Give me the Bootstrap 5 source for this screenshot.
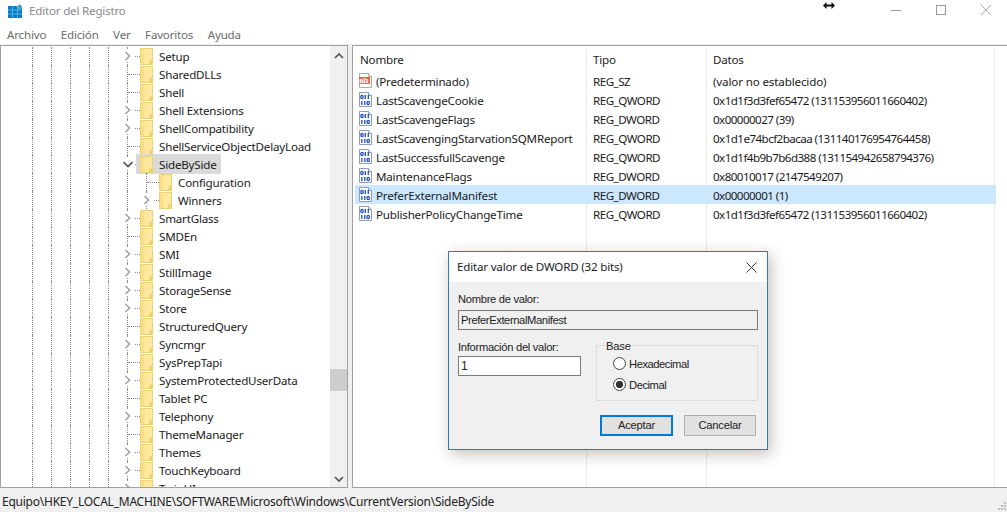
<!DOCTYPE html>
<html lang="es">
<head>
<meta charset="utf-8">
<title>Editor del Registro</title>
<link href="https://cdn.jsdelivr.net/npm/bootstrap@5.3.0/dist/css/bootstrap.min.css" rel="stylesheet">
<style>
html,body{height:512px;overflow:hidden}
body{font-family:"Noto Sans",sans-serif;font-size:11.6px;letter-spacing:-.2px;color:#1a1a1a;background:#fff;line-height:18px}
.win{width:1007px;height:512px;position:relative}
.titlebar{height:22px;color:#8a8a8a;padding-left:8px}
.titlebar .ttl{margin-left:7px}
.wcgroup{margin-right:16px;margin-bottom:2px}
.wc{margin-left:35px}
.menubar{height:24px;color:#6b6b6b;padding-left:7px;padding-top:4px;gap:14.5px;border-bottom:1px solid #f0f0f0}
.mainarea{height:443px;background:#f0f0f0}
.treepane{width:348px;background:#fff;border:1px solid #a0a0a0;overflow:hidden}
.treescroll{width:17px;background:#f0f0f0;flex:none}
.arrtop{margin-top:6px}
.treebody{width:329px;height:441px;overflow:hidden;padding-top:1px;padding-left:31px;flex:none}
.tr-row{height:18px;white-space:nowrap}
.guide{width:19px;height:18px;border-left:1px dotted #8c8c8c;flex:none}
.expcell{width:13px;height:18px;border-left:1px dotted #8c8c8c;flex:none}
.hdots{flex:1;border-top:1px dotted #8c8c8c;height:0}
.chev{flex:none;margin-left:-5px;background:#fff;height:12px;width:10px;margin-right:2px}
.fold{width:13px;height:17px;flex:none;display:block}
.tr-label{margin-left:6px;padding-top:2px}
.selwrap{background:#d9d9d9;margin-left:-4px;padding-left:4px;padding-right:4px}
.scthumb{position:absolute;left:0;top:323px;width:17px;height:22px;background:#cdcdcd}
.listpane{margin-left:4px;flex:1;background:#fff;border:1px solid #a0a0a0;border-width:1px 0 1px 1px;position:relative}
.colsep{position:absolute;top:0;bottom:0;width:1px;background:#e8e8ee}
.lhead{height:25px;padding-left:7px;padding-top:2px;position:relative}
.lrow{height:19px;position:relative;padding-left:5px;white-space:nowrap}
.lrow span{padding-top:2px}
.lrow.picked{background:#cce8ff;margin-left:2px;padding-left:3px;width:641px}
.cname{width:233px;flex:none}
.cname2{width:217px;flex:none}
.ctype{width:120px;flex:none}
.lrow .ctype{letter-spacing:-.5px}
.lrow .cdata{letter-spacing:-.55px}
.lrow .cdata.wordy{letter-spacing:-.14px}
.regico{width:15px;height:17px;flex:none;margin-right:3px}
.statusbar{height:24px;background:#f0f0f0;padding-left:2px;padding-top:3px;font-size:12px;color:#222;letter-spacing:-.24px}
.grip{position:absolute;right:0;bottom:0}
.dlg{position:absolute;left:448px;top:251px;width:320px;height:199px;background:#f0f0f0;border:1px solid #2b7cb8;box-shadow:3px 4px 14px rgba(0,0,0,.25);font-family:"Liberation Sans",sans-serif;font-size:11.2px;letter-spacing:-.3px;color:#222;line-height:14px}
.dlghead{height:30px;background:#fff;padding:0 10px 0 8px;font-family:"Noto Sans",sans-serif;font-size:11.6px;letter-spacing:-.2px}
.dlgbody{padding:10px 9px 0}
.fld-label{margin-bottom:4px}
.fld-label.tight{margin-bottom:2px}
.namefield.form-control{height:20px;background:#f0f0f0;border:1px solid #7a7a7a;border-radius:0;padding:0 2px;font-size:11.2px;color:#222;line-height:14px;width:300px;letter-spacing:-.39px}
.valfield.form-control{height:20px;width:123px;border:1px solid #7a7a7a;border-radius:0;padding:0 2px;font-size:12px;color:#222}
.valcol{width:138px;padding-top:10px}
.basebox{width:162px;height:56px;border:1px solid #dcdcdc;position:relative;margin-top:15px;padding:7px 0 0 16px}
.baselegend{position:absolute;left:8px;top:-7px;background:#f0f0f0;padding:0 1px;font-size:11.2px;letter-spacing:-.2px}
.radio-line.form-check{min-height:0;height:21px;padding-left:0;margin:0;gap:3px}
.radio-line .form-check-input{float:none;margin:0;width:13px;height:13px;border:1px solid #444;background-color:#fff;flex:none}
.radio-line .form-check-input:checked{background-color:#fff;border-color:#444;background-image:radial-gradient(circle,#333 0 3.4px,transparent 3.9px)}
.radio-line .form-check-label{font-size:11.2px;letter-spacing:-.45px}
.btnrow{margin-top:14px;padding-right:2px;gap:11px}
.wbtn.btn{height:21px;border-radius:0;padding:0;font-size:11.2px;letter-spacing:-.2px;background:#e1e1e1;color:#222;line-height:17px;font-family:"Liberation Sans",sans-serif}
.okbtn.btn{width:73px;border:2px solid #0078d7}
.cancelbtn.btn{width:72px;border:1px solid #adadad}
.cursoricon{position:absolute;left:823px;top:2px}
</style>
</head>
<body>
<svg width="0" height="0" class="position-absolute">
<defs>
<symbol id="f" viewBox="0 0 13 17"><rect x=".5" y=".5" width="12" height="16" fill="#ffe99f" stroke="#edd07c"/><path d="M1 1h3.500v15H1z" fill="#fcdf82"/><path d="M10.500 11l2 2.500v3h-4z" fill="#f5cf6c"/></symbol>
<symbol id="b" viewBox="0 0 15 17"><path d="M1.500 1.500h9l3 3v11h-12z" fill="#fff" stroke="#8f9cb5"/><path d="M10.500 1.500v3h3" fill="#e8edf5" stroke="#8f9cb5"/><g fill="none" stroke="#1f4fb5" stroke-width="1.300"><ellipse cx="4" cy="6" rx="1.200" ry="1.700"/><path d="M7.300 4v4M10.300 4v4"/><path d="M3.800 10v4"/><path d="M6.800 10v4"/><ellipse cx="10.200" cy="12" rx="1.200" ry="1.700"/></g></symbol>
<symbol id="c" viewBox="0 0 10 12"><path d="M2.500 2l4 4-4 4" fill="none" stroke="#a6a6a6" stroke-width="1.700"/></symbol>
</defs>
</svg>
<div class="win d-flex flex-column">
  <div class="titlebar d-flex align-items-center">
    <svg width="14" height="14" viewBox="0 0 14 14"><rect y="2" width="14" height="12" fill="#0a7ac4"/><path d="M4.500 2v12M9.500 2v12M0 6h14M0 10h14" stroke="#4fb3e0" stroke-width="1"/><path d="M11.500 0l2.500 2.500-2.500 2.500-2.500-2.500z" fill="#2aa0c9" stroke="#fff" stroke-width=".5"/></svg>
    <span class="ttl">Editor del Registro</span>
    <div class="wcgroup ms-auto d-flex align-items-center">
      <svg class="wc" width="10" height="10" viewBox="0 0 10 10"><path d="M0 5.500h10" stroke="#999"/></svg>
      <svg class="wc" width="10" height="10" viewBox="0 0 10 10"><rect x=".5" y=".5" width="9" height="9" fill="none" stroke="#999"/></svg>
      <svg class="wc" width="10" height="10" viewBox="0 0 10 10"><path d="M0 0l10 10M10 0L0 10" stroke="#aaa"/></svg>
    </div>
  </div>
  <svg class="cursoricon" width="12" height="7" viewBox="0 0 12 7"><path d="M0 3.500L3.500 0v2.500h5V0L12 3.500 8.500 7V4.500h-5V7z" fill="#111"/></svg>
  <div class="menubar d-flex align-items-center"><span>Archivo</span><span>Edición</span><span>Ver</span><span>Favoritos</span><span>Ayuda</span></div>
  <div class="mainarea d-flex">
    <div class="treepane d-flex">
      <div class="treebody">
        <div class="tr-row d-flex align-items-center"><i class="guide"></i><i class="guide"></i><i class="guide"></i><i class="guide"></i><i class="guide"></i><div class="expcell d-flex align-items-center"><svg class="chev"><use href="#c"/></svg><i class="hdots"></i></div><svg class="fold"><use href="#f"/></svg><span class="tr-label">Setup</span></div>
        <div class="tr-row d-flex align-items-center"><i class="guide"></i><i class="guide"></i><i class="guide"></i><i class="guide"></i><i class="guide"></i><div class="expcell d-flex align-items-center"><i class="hdots"></i></div><svg class="fold"><use href="#f"/></svg><span class="tr-label">SharedDLLs</span></div>
        <div class="tr-row d-flex align-items-center"><i class="guide"></i><i class="guide"></i><i class="guide"></i><i class="guide"></i><i class="guide"></i><div class="expcell d-flex align-items-center"><i class="hdots"></i></div><svg class="fold"><use href="#f"/></svg><span class="tr-label">Shell</span></div>
        <div class="tr-row d-flex align-items-center"><i class="guide"></i><i class="guide"></i><i class="guide"></i><i class="guide"></i><i class="guide"></i><div class="expcell d-flex align-items-center"><svg class="chev"><use href="#c"/></svg><i class="hdots"></i></div><svg class="fold"><use href="#f"/></svg><span class="tr-label">Shell Extensions</span></div>
        <div class="tr-row d-flex align-items-center"><i class="guide"></i><i class="guide"></i><i class="guide"></i><i class="guide"></i><i class="guide"></i><div class="expcell d-flex align-items-center"><svg class="chev"><use href="#c"/></svg><i class="hdots"></i></div><svg class="fold"><use href="#f"/></svg><span class="tr-label">ShellCompatibility</span></div>
        <div class="tr-row d-flex align-items-center"><i class="guide"></i><i class="guide"></i><i class="guide"></i><i class="guide"></i><i class="guide"></i><div class="expcell d-flex align-items-center"><i class="hdots"></i></div><svg class="fold"><use href="#f"/></svg><span class="tr-label">ShellServiceObjectDelayLoad</span></div>
        <div class="tr-row d-flex align-items-center"><i class="guide"></i><i class="guide"></i><i class="guide"></i><i class="guide"></i><i class="guide"></i><div class="expcell d-flex align-items-center"><svg class="chev" viewBox="0 0 10 12"><path d="M.5 4l4.500 4.500L9.500 4" fill="none" stroke="#555" stroke-width="1.700"/></svg><i class="hdots"></i></div><div class="selwrap d-flex align-items-center"><svg class="fold"><use href="#f"/></svg><span class="tr-label">SideBySide</span></div></div>
        <div class="tr-row d-flex align-items-center"><i class="guide"></i><i class="guide"></i><i class="guide"></i><i class="guide"></i><i class="guide"></i><i class="guide"></i><div class="expcell d-flex align-items-center"><i class="hdots"></i></div><svg class="fold"><use href="#f"/></svg><span class="tr-label">Configuration</span></div>
        <div class="tr-row d-flex align-items-center"><i class="guide"></i><i class="guide"></i><i class="guide"></i><i class="guide"></i><i class="guide"></i><i class="guide"></i><div class="expcell d-flex align-items-center"><svg class="chev"><use href="#c"/></svg><i class="hdots"></i></div><svg class="fold"><use href="#f"/></svg><span class="tr-label">Winners</span></div>
        <div class="tr-row d-flex align-items-center"><i class="guide"></i><i class="guide"></i><i class="guide"></i><i class="guide"></i><i class="guide"></i><div class="expcell d-flex align-items-center"><svg class="chev"><use href="#c"/></svg><i class="hdots"></i></div><svg class="fold"><use href="#f"/></svg><span class="tr-label">SmartGlass</span></div>
        <div class="tr-row d-flex align-items-center"><i class="guide"></i><i class="guide"></i><i class="guide"></i><i class="guide"></i><i class="guide"></i><div class="expcell d-flex align-items-center"><i class="hdots"></i></div><svg class="fold"><use href="#f"/></svg><span class="tr-label">SMDEn</span></div>
        <div class="tr-row d-flex align-items-center"><i class="guide"></i><i class="guide"></i><i class="guide"></i><i class="guide"></i><i class="guide"></i><div class="expcell d-flex align-items-center"><svg class="chev"><use href="#c"/></svg><i class="hdots"></i></div><svg class="fold"><use href="#f"/></svg><span class="tr-label">SMI</span></div>
        <div class="tr-row d-flex align-items-center"><i class="guide"></i><i class="guide"></i><i class="guide"></i><i class="guide"></i><i class="guide"></i><div class="expcell d-flex align-items-center"><svg class="chev"><use href="#c"/></svg><i class="hdots"></i></div><svg class="fold"><use href="#f"/></svg><span class="tr-label">StillImage</span></div>
        <div class="tr-row d-flex align-items-center"><i class="guide"></i><i class="guide"></i><i class="guide"></i><i class="guide"></i><i class="guide"></i><div class="expcell d-flex align-items-center"><svg class="chev"><use href="#c"/></svg><i class="hdots"></i></div><svg class="fold"><use href="#f"/></svg><span class="tr-label">StorageSense</span></div>
        <div class="tr-row d-flex align-items-center"><i class="guide"></i><i class="guide"></i><i class="guide"></i><i class="guide"></i><i class="guide"></i><div class="expcell d-flex align-items-center"><svg class="chev"><use href="#c"/></svg><i class="hdots"></i></div><svg class="fold"><use href="#f"/></svg><span class="tr-label">Store</span></div>
        <div class="tr-row d-flex align-items-center"><i class="guide"></i><i class="guide"></i><i class="guide"></i><i class="guide"></i><i class="guide"></i><div class="expcell d-flex align-items-center"><i class="hdots"></i></div><svg class="fold"><use href="#f"/></svg><span class="tr-label">StructuredQuery</span></div>
        <div class="tr-row d-flex align-items-center"><i class="guide"></i><i class="guide"></i><i class="guide"></i><i class="guide"></i><i class="guide"></i><div class="expcell d-flex align-items-center"><svg class="chev"><use href="#c"/></svg><i class="hdots"></i></div><svg class="fold"><use href="#f"/></svg><span class="tr-label">Syncmgr</span></div>
        <div class="tr-row d-flex align-items-center"><i class="guide"></i><i class="guide"></i><i class="guide"></i><i class="guide"></i><i class="guide"></i><div class="expcell d-flex align-items-center"><i class="hdots"></i></div><svg class="fold"><use href="#f"/></svg><span class="tr-label">SysPrepTapi</span></div>
        <div class="tr-row d-flex align-items-center"><i class="guide"></i><i class="guide"></i><i class="guide"></i><i class="guide"></i><i class="guide"></i><div class="expcell d-flex align-items-center"><svg class="chev"><use href="#c"/></svg><i class="hdots"></i></div><svg class="fold"><use href="#f"/></svg><span class="tr-label">SystemProtectedUserData</span></div>
        <div class="tr-row d-flex align-items-center"><i class="guide"></i><i class="guide"></i><i class="guide"></i><i class="guide"></i><i class="guide"></i><div class="expcell d-flex align-items-center"><i class="hdots"></i></div><svg class="fold"><use href="#f"/></svg><span class="tr-label">Tablet PC</span></div>
        <div class="tr-row d-flex align-items-center"><i class="guide"></i><i class="guide"></i><i class="guide"></i><i class="guide"></i><i class="guide"></i><div class="expcell d-flex align-items-center"><svg class="chev"><use href="#c"/></svg><i class="hdots"></i></div><svg class="fold"><use href="#f"/></svg><span class="tr-label">Telephony</span></div>
        <div class="tr-row d-flex align-items-center"><i class="guide"></i><i class="guide"></i><i class="guide"></i><i class="guide"></i><i class="guide"></i><div class="expcell d-flex align-items-center"><i class="hdots"></i></div><svg class="fold"><use href="#f"/></svg><span class="tr-label">ThemeManager</span></div>
        <div class="tr-row d-flex align-items-center"><i class="guide"></i><i class="guide"></i><i class="guide"></i><i class="guide"></i><i class="guide"></i><div class="expcell d-flex align-items-center"><svg class="chev"><use href="#c"/></svg><i class="hdots"></i></div><svg class="fold"><use href="#f"/></svg><span class="tr-label">Themes</span></div>
        <div class="tr-row d-flex align-items-center"><i class="guide"></i><i class="guide"></i><i class="guide"></i><i class="guide"></i><i class="guide"></i><div class="expcell d-flex align-items-center"><svg class="chev"><use href="#c"/></svg><i class="hdots"></i></div><svg class="fold"><use href="#f"/></svg><span class="tr-label">TouchKeyboard</span></div>
        <div class="tr-row d-flex align-items-center"><i class="guide"></i><i class="guide"></i><i class="guide"></i><i class="guide"></i><i class="guide"></i><div class="expcell d-flex align-items-center"><svg class="chev"><use href="#c"/></svg><i class="hdots"></i></div><svg class="fold"><use href="#f"/></svg><span class="tr-label">TwinUI</span></div>
      </div>
      <div class="treescroll position-relative d-flex flex-column justify-content-between align-items-center">
        <svg class="arrtop" width="10" height="7" viewBox="0 0 10 7"><path d="M1 6l4-4 4 4" fill="none" stroke="#555" stroke-width="1.700"/></svg>
        <div class="scthumb"></div>
        <svg class="mb-1" width="10" height="7" viewBox="0 0 10 7"><path d="M1 1l4 4 4-4" fill="none" stroke="#555" stroke-width="1.700"/></svg>
      </div>
    </div>
    <div class="listpane">
      <i class="colsep" style="left:233px"></i><i class="colsep" style="left:353px"></i><i class="colsep" style="left:641px"></i>
      <div class="lhead d-flex align-items-center"><span class="cname">Nombre</span><span class="ctype">Tipo</span><span>Datos</span></div>
      <div class="lrow d-flex align-items-center"><svg class="regico" viewBox="0 0 15 17"><path d="M1.500 1.500h9l3 3v11h-12z" fill="#fff" stroke="#b9a79c"/><path d="M10.500 1.500v3h3" fill="#f4ece6" stroke="#b9a79c"/><rect x="1" y="5" width="11" height="7" fill="#e8694a"/><text x="1.300" y="11" font-size="8" font-weight="700" fill="#fff" font-family="Liberation Sans">ab</text></svg><span class="cname2">(Predeterminado)</span><span class="ctype">REG_SZ</span><span class="cdata wordy">(valor no establecido)</span></div>
      <div class="lrow d-flex align-items-center"><svg class="regico"><use href="#b"/></svg><span class="cname2">LastScavengeCookie</span><span class="ctype">REG_QWORD</span><span class="cdata">0x1d1f3d3fef65472 (131153956011660402)</span></div>
      <div class="lrow d-flex align-items-center"><svg class="regico"><use href="#b"/></svg><span class="cname2">LastScavengeFlags</span><span class="ctype">REG_DWORD</span><span class="cdata">0x00000027 (39)</span></div>
      <div class="lrow d-flex align-items-center"><svg class="regico"><use href="#b"/></svg><span class="cname2">LastScavengingStarvationSQMReport</span><span class="ctype">REG_QWORD</span><span class="cdata">0x1d1e74bcf2bacaa (131140176954764458)</span></div>
      <div class="lrow d-flex align-items-center"><svg class="regico"><use href="#b"/></svg><span class="cname2">LastSuccessfullScavenge</span><span class="ctype">REG_QWORD</span><span class="cdata">0x1d1f4b9b7b6d388 (131154942658794376)</span></div>
      <div class="lrow d-flex align-items-center"><svg class="regico"><use href="#b"/></svg><span class="cname2">MaintenanceFlags</span><span class="ctype">REG_DWORD</span><span class="cdata">0x80010017 (2147549207)</span></div>
      <div class="lrow picked d-flex align-items-center"><svg class="regico"><use href="#b"/></svg><span class="cname2">PreferExternalManifest</span><span class="ctype">REG_DWORD</span><span class="cdata">0x00000001 (1)</span></div>
      <div class="lrow d-flex align-items-center"><svg class="regico"><use href="#b"/></svg><span class="cname2">PublisherPolicyChangeTime</span><span class="ctype">REG_QWORD</span><span class="cdata">0x1d1f3d3fef65472 (131153956011660402)</span></div>
    </div>
  </div>
  <div class="statusbar d-flex align-items-center">Equipo\HKEY_LOCAL_MACHINE\SOFTWARE\Microsoft\Windows\CurrentVersion\SideBySide</div>
  <svg class="grip" width="10" height="12" viewBox="0 0 10 12"><g fill="#bdbdbd"><rect x="7" y="2" width="2" height="2"/><rect x="4" y="5" width="2" height="2"/><rect x="7" y="5" width="2" height="2"/><rect x="1" y="8" width="2" height="2"/><rect x="4" y="8" width="2" height="2"/><rect x="7" y="8" width="2" height="2"/></g></svg>

  <div class="dlg">
    <div class="dlghead d-flex align-items-center justify-content-between"><span>Editar valor de DWORD (32 bits)</span><svg width="11" height="11" viewBox="0 0 11 11"><path d="M.5.500l10 10M10.500.500l-10 10" stroke="#333"/></svg></div>
    <div class="dlgbody">
      <div class="fld-label">Nombre de valor:</div>
      <input class="form-control namefield" value="PreferExternalManifest" readonly>
      <div class="d-flex">
        <div class="valcol"><div class="fld-label tight">Información del valor:</div><input class="form-control valfield" value="1"></div>
        <div class="basebox">
          <span class="baselegend">Base</span>
          <div class="form-check radio-line d-flex align-items-center"><input class="form-check-input" type="radio" name="b" id="r1"><label class="form-check-label" for="r1">Hexadecimal</label></div>
          <div class="form-check radio-line d-flex align-items-center"><input class="form-check-input" type="radio" name="b" id="r2" checked><label class="form-check-label" for="r2">Decimal</label></div>
        </div>
      </div>
      <div class="btnrow d-flex justify-content-end align-items-start"><button class="btn wbtn okbtn" type="button">Aceptar</button><button class="btn wbtn cancelbtn" type="button">Cancelar</button></div>
    </div>
  </div>
</div>
<script src="https://cdn.jsdelivr.net/npm/bootstrap@5.3.0/dist/js/bootstrap.bundle.min.js"></script>
</body>
</html>
